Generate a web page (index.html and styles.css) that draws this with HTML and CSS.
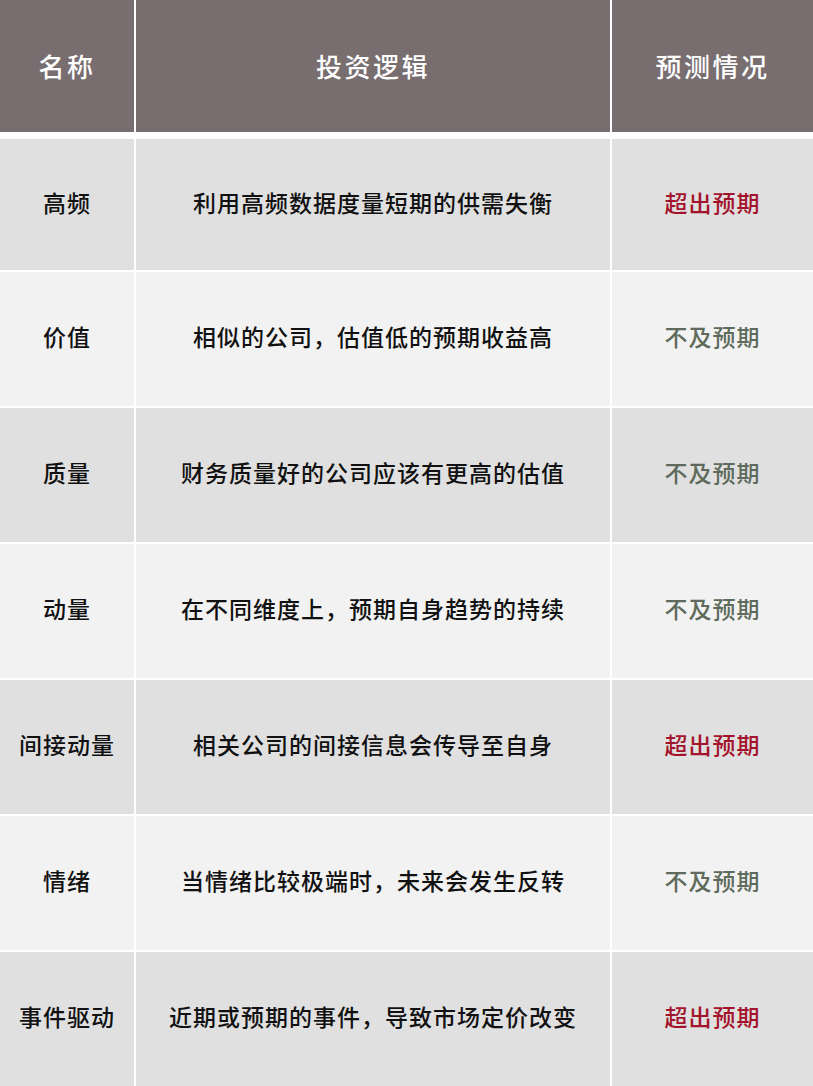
FILE: index.html
```html
<!DOCTYPE html>
<html lang="zh">
<head>
<meta charset="utf-8">
<title>因子表</title>
<link rel="stylesheet" href="styles.css">
</head>
<body>
<div class="table">
  <div class="cell head">名称</div>
  <div class="cell head">投资逻辑</div>
  <div class="cell head">预测情况</div>

  <div class="cell odd">高频</div>
  <div class="cell odd">利用高频数据度量短期的供需失衡</div>
  <div class="cell odd up">超出预期</div>

  <div class="cell even">价值</div>
  <div class="cell even">相似的公司，估值低的预期收益高</div>
  <div class="cell even down">不及预期</div>

  <div class="cell odd">质量</div>
  <div class="cell odd">财务质量好的公司应该有更高的估值</div>
  <div class="cell odd down">不及预期</div>

  <div class="cell even">动量</div>
  <div class="cell even">在不同维度上，预期自身趋势的持续</div>
  <div class="cell even down">不及预期</div>

  <div class="cell odd">间接动量</div>
  <div class="cell odd">相关公司的间接信息会传导至自身</div>
  <div class="cell odd up">超出预期</div>

  <div class="cell even">情绪</div>
  <div class="cell even">当情绪比较极端时，未来会发生反转</div>
  <div class="cell even down">不及预期</div>

  <div class="cell odd">事件驱动</div>
  <div class="cell odd">近期或预期的事件，导致市场定价改变</div>
  <div class="cell odd up">超出预期</div>
</div>
</body>
</html>
```
FILE: styles.css
```css
html, body {
  margin: 0;
  padding: 0;
  background: #ffffff;
}
body {
  font-family: "Noto Sans CJK SC", "Noto Sans", sans-serif;
  width: 813px;
  height: 1086px;
  overflow: hidden;
}
.table {
  display: grid;
  grid-template-columns: 134px 474px 1fr;
  grid-template-rows: 137px 131px repeat(6, 134px);
  column-gap: 2px;
  row-gap: 2px;
}
.cell {
  display: flex;
  align-items: center;
  justify-content: center;
  font-size: 23px;
  letter-spacing: 1px;
  font-weight: 500;
  color: #111111;
  padding-bottom: 6px;
}
.head {
  background: #786e70;
  color: #ffffff;
  font-size: 26px;
  letter-spacing: 2.5px;
  margin-bottom: 5px;
  padding-bottom: 2px;
}
.odd { background: #e0e0e0; }
.even { background: #f2f2f2; }
.up { color: #a3142c; }
.down { color: #5e6b5c; }
```
